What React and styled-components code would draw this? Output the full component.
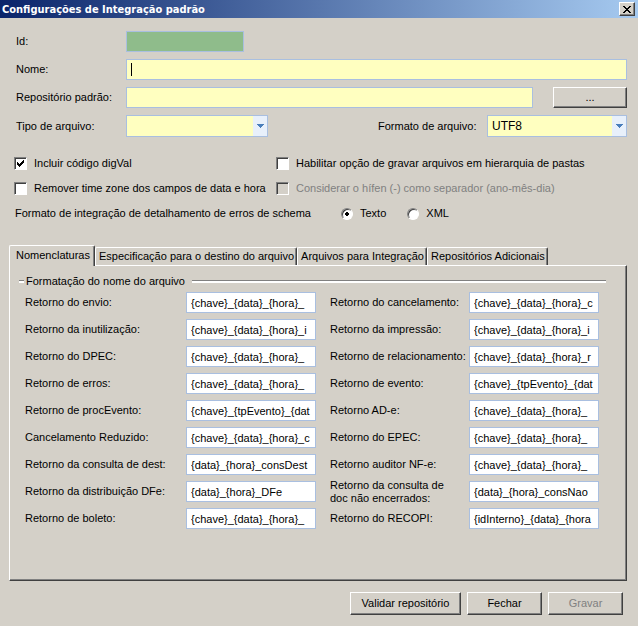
import { useState } from "react";
import styled, { createGlobalStyle } from "styled-components";

const GlobalStyle = createGlobalStyle`
  * {
    box-sizing: border-box;
  }
  body {
    margin: 0;
    background-color: #d4d0c8;
  }
  body, input, select, button {
    font-family: "Liberation Sans", Arial, sans-serif;
    font-size: 11px;
    line-height: 13px;
    color: #000;
  }
`;

const Window = styled.div`
  min-height: 100vh;
  background-color: #d4d0c8;
`;
const TitleBar = styled.header`
  display: flex;
  align-items: center;
  justify-content: space-between;
  height: 18px;
  padding: 0 3px 0 2px;
  background: linear-gradient(to right, #0a246a, #a6caf0);
`;
const Title = styled.h1`
  margin: 0;
  font-family: "DejaVu Sans Condensed", "DejaVu Sans", Tahoma, sans-serif;
  font-size: 11px;
  font-weight: 700;
  font-stretch: condensed;
  color: #fff;
`;
const Button = styled.button`
  width: ${({ $width }) => $width || "75px"};
  height: ${({ $height }) => $height || "23px"};
  padding: 0;
  border: 1px solid;
  border-color: #fff #404040 #404040 #fff;
  box-shadow: inset -1px -1px 0 #808080;
  background-color: #d4d0c8;
  flex-shrink: 0;

  &:disabled {
    color: #808080;
  }
`;
const CloseButton = styled(Button)`
  display: flex;
  align-items: center;
  justify-content: center;
`;
const Form = styled.form`
  padding: 13px 11px 11px 9px;
`;
const General = styled.div`
  display: flex;
  flex-direction: column;
  gap: 7px;
  padding-left: 7px;
`;
const Row = styled.div`
  display: flex;
  align-items: center;
`;
const Label = styled.label`
  flex: 0 0 ${({ $width }) => $width};
  white-space: pre-line;
`;
const TextBox = styled.input`
  flex: ${({ $width }) => ($width ? `0 0 ${$width}` : "1")};
  min-width: 0;
  height: 21px;
  padding: 1px 4px 0;
  border: 1px solid #a9bfe0;
  border-radius: 0;
  outline: none;
  background-color: ${({ $fill }) => $fill || "#fff"};
`;
// steady caret while the box is still empty
const CaretBox = styled(TextBox)`
  &:placeholder-shown {
    caret-color: transparent;
    background-image: linear-gradient(#000, #000);
    background-position: 4px 3px;
    background-size: 1px 13px;
    background-repeat: no-repeat;
  }
`;
const Spacer = styled.div`
  flex: ${({ $width }) => ($width ? `0 0 ${$width}` : "1")};
`;
const Combo = styled.div`
  display: flex;
  width: ${({ $width }) => $width};
  height: 22px;
  border: 1px solid #a9bfe0;
  background-color: #ffffc0;
`;
const ComboSelect = styled.select`
  flex: 1;
  min-width: 0;
  padding: 0 4px;
  border: none;
  outline: none;
  appearance: none;
  background: transparent;
  font-size: 12px;
`;
const ComboArrow = styled.span`
  display: flex;
  align-items: center;
  justify-content: center;
  width: 14px;
  background-color: #e8f0fb;
  pointer-events: none;
`;
const Options = styled.div`
  display: grid;
  grid-template-columns: 262px 1fr;
  grid-auto-rows: 25px;
  align-items: center;
  margin: 14px 0 19px;
  padding-left: 5px;
`;
const Check = styled.label`
  display: flex;
  align-items: center;
  gap: 7px;
  color: ${({ $disabled }) => ($disabled ? "#808080" : "#000")};
`;
const CheckInput = styled.input`
  appearance: none;
  width: 13px;
  height: 13px;
  margin: 0;
  border: 1px solid;
  border-color: #808080 #fff #fff #808080;
  box-shadow: inset 1px 1px 0 #404040;
  background: #fff center / 7px 7px no-repeat;

  &:checked {
    background-image: url("data:image/svg+xml,%3Csvg xmlns='http://www.w3.org/2000/svg' viewBox='0 0 7 7' shape-rendering='crispEdges'%3E%3Cpath d='M0 2h1v1h1v1h1v-1h1v-1h1v-1h1v-1h1v3h-1v1h-1v1h-1v1h-1v1h-1v-1h-1v-1h-1z'/%3E%3C/svg%3E");
  }
  &:disabled {
    background-color: #d4d0c8;
  }
`;
const RadioInput = styled.input`
  appearance: none;
  width: 12px;
  height: 12px;
  margin: 0;
  border: 1px solid;
  border-color: #808080 #fff #fff #808080;
  border-radius: 50%;
  box-shadow: inset 1px 1px 0 #404040;
  background-color: #fff;

  &:checked {
    background-image: radial-gradient(circle, #000 2px, transparent 2px);
  }
`;
const RadioRow = styled.div`
  grid-column: 1 / -1;
  display: flex;
  align-items: center;
  padding-left: 1px;
`;
const RadioTitle = styled.span`
  flex: 0 0 326px;
`;
const Radios = styled.div`
  display: flex;
  gap: 21px;
`;
const TabList = styled.div`
  display: flex;
  align-items: flex-end;
`;
const Tab = styled.button`
  height: ${({ $active }) => ($active ? "21px" : "18px")};
  margin-bottom: ${({ $active }) => ($active ? "-1px" : "0")};
  padding: ${({ $active }) => ($active ? "0 4px 1px 6px" : "0 2px 0 3px")};
  border: 1px solid;
  border-color: #fff #404040 transparent #fff;
  border-bottom: none;
  border-radius: 2px 2px 0 0;
  box-shadow: inset -1px 0 0 #808080;
  background-color: #d4d0c8;
  white-space: nowrap;
  z-index: ${({ $active }) => ($active ? 1 : 0)};
`;
const Panel = styled.section`
  padding: 9px 20px 51px 9px;
  border: 1px solid;
  border-color: #fff #404040 #404040 #fff;
  box-shadow: inset -1px -1px 0 #808080;
`;
const Group = styled.fieldset`
  min-width: 0;
  margin: 0;
  padding: 0;
  border: none;
`;
const Legend = styled.legend`
  display: flex;
  align-items: center;
  width: 100%;
  padding: 0;

  &::before,
  &::after {
    content: "";
    height: 2px;
    border-top: 1px solid #808080;
    background-color: #fff;
  }
  &::before {
    width: 5px;
    margin-right: 2px;
  }
  &::after {
    flex: 1;
    margin-left: 7px;
  }
`;
const Fields = styled.div`
  display: grid;
  grid-template-columns: minmax(0, 291fr) minmax(0, 269fr);
  grid-auto-rows: 21px;
  gap: 6px 14px;
  padding: 4px 7px 0 6px;
`;
const Footer = styled.footer`
  display: flex;
  justify-content: flex-end;
  gap: 6px;
  padding: 11px 4px 0 0;
`;

const TABS = [
  "Nomenclaturas",
  "Especificação para o destino do arquivo",
  "Arquivos para Integração",
  "Repositórios Adicionais",
];

const FIELDS = [
  ["Retorno do envio:", "{chave}_{data}_{hora}_"],
  ["Retorno do cancelamento:", "{chave}_{data}_{hora}_c"],
  ["Retorno da inutilização:", "{chave}_{data}_{hora}_i"],
  ["Retorno da impressão:", "{chave}_{data}_{hora}_i"],
  ["Retorno do DPEC:", "{chave}_{data}_{hora}_"],
  ["Retorno de relacionamento:", "{chave}_{data}_{hora}_r"],
  ["Retorno de erros:", "{chave}_{data}_{hora}_"],
  ["Retorno de evento:", "{chave}_{tpEvento}_{dat"],
  ["Retorno de procEvento:", "{chave}_{tpEvento}_{dat"],
  ["Retorno AD-e:", "{chave}_{data}_{hora}_"],
  ["Cancelamento Reduzido:", "{chave}_{data}_{hora}_c"],
  ["Retorno do EPEC:", "{chave}_{data}_{hora}_"],
  ["Retorno da consulta de dest:", "{data}_{hora}_consDest"],
  ["Retorno auditor NF-e:", "{chave}_{data}_{hora}_"],
  ["Retorno da distribuição DFe:", "{data}_{hora}_DFe"],
  ["Retorno da consulta de\ndoc não encerrados:", "{data}_{hora}_consNao"],
  ["Retorno de boleto:", "{chave}_{data}_{hora}_"],
  ["Retorno do RECOPI:", "{idInterno}_{data}_{hora"],
];

const Dropdown = ({ id, width, options }) => (
  <Combo $width={width}>
    <ComboSelect id={id}>
      {options.map((option) => (
        <option key={option}>{option}</option>
      ))}
    </ComboSelect>
    <ComboArrow>
      <svg width="7" height="4" viewBox="0 0 7 4">
        <path d="M0 0h7v1h-1v1h-1v1h-1v1h-1v-1h-1v-1h-1v-1h-1z" fill="#4a7ebb" />
      </svg>
    </ComboArrow>
  </Combo>
);

const App = () => {
  const [tab, setTab] = useState(TABS[0]);

  return (
    <Window>
      <GlobalStyle />
      <TitleBar>
        <Title>Configurações de Integração padrão</Title>
        <CloseButton $width="16px" $height="14px" aria-label="Fechar janela">
          <svg width="8" height="7" viewBox="0 0 8 7" shapeRendering="crispEdges">
            <path d="M0 0h2v1h1v1h2v-1h1v-1h2v1h-1v1h-1v1h-1v1h1v1h1v1h1v1h-2v-1h-1v-1h-2v1h-1v1h-2v-1h1v-1h1v-1h1v-1h-1v-1h-1v-1h-1z" />
          </svg>
        </CloseButton>
      </TitleBar>
      <Form onSubmit={(e) => e.preventDefault()}>
        <General>
          <Row>
            <Label $width="110px" htmlFor="id">Id:</Label>
            <TextBox id="id" $width="118px" $fill="#8fbc8b" readOnly />
          </Row>
          <Row>
            <Label $width="110px" htmlFor="nome">Nome:</Label>
            <CaretBox id="nome" $fill="#ffffc0" placeholder=" " autoFocus />
          </Row>
          <Row>
            <Label $width="110px" htmlFor="repositorio">Repositório padrão:</Label>
            <TextBox id="repositorio" $fill="#ffffc0" />
            <Spacer $width="20px" />
            <Button type="button" $width="74px" $height="21px">...</Button>
          </Row>
          <Row>
            <Label $width="110px" htmlFor="tipo">Tipo de arquivo:</Label>
            <Dropdown id="tipo" width="142px" options={[""]} />
            <Spacer />
            <Label $width="109px" htmlFor="formato">Formato de arquivo:</Label>
            <Dropdown id="formato" width="140px" options={["UTF8"]} />
          </Row>
        </General>

        <Options>
          <Check>
            <CheckInput type="checkbox" defaultChecked />
            Incluir código digVal
          </Check>
          <Check>
            <CheckInput type="checkbox" />
            Habilitar opção de gravar arquivos em hierarquia de pastas
          </Check>
          <Check>
            <CheckInput type="checkbox" />
            Remover time zone dos campos de data e hora
          </Check>
          <Check $disabled>
            <CheckInput type="checkbox" disabled />
            Considerar o hífen (-) como separador (ano-mês-dia)
          </Check>
          <RadioRow role="radiogroup" aria-labelledby="detalhamento">
            <RadioTitle id="detalhamento">
              Formato de integração de detalhamento de erros de schema
            </RadioTitle>
            <Radios>
              <Check>
                <RadioInput type="radio" name="formatoErros" defaultChecked />
                Texto
              </Check>
              <Check>
                <RadioInput type="radio" name="formatoErros" />
                XML
              </Check>
            </Radios>
          </RadioRow>
        </Options>

        <TabList role="tablist">
          {TABS.map((name) => (
            <Tab
              key={name}
              type="button"
              role="tab"
              aria-selected={tab === name}
              $active={tab === name}
              onClick={() => setTab(name)}
            >
              {name}
            </Tab>
          ))}
        </TabList>
        <Panel role="tabpanel">
          <Group>
            <Legend>Formatação do nome do arquivo</Legend>
            <Fields>
              {FIELDS.map(([label, value], i) => (
                <Row key={label}>
                  <Label $width={i % 2 ? "139px" : "161px"} htmlFor={`campo${i}`}>
                    {label}
                  </Label>
                  <TextBox id={`campo${i}`} defaultValue={value} />
                </Row>
              ))}
            </Fields>
          </Group>
        </Panel>

        <Footer>
          <Button type="button" $width="111px">Validar repositório</Button>
          <Button type="button">Fechar</Button>
          <Button type="submit" disabled>Gravar</Button>
        </Footer>
      </Form>
    </Window>
  );
};

export default App;
